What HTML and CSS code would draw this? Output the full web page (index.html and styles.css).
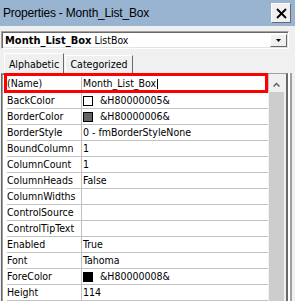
FILE: index.html
```html
<!DOCTYPE html>
<html lang="en">
<head>
    <meta charset="UTF-8">
    <title>Properties - Month_List_Box</title>
    <link rel="stylesheet" href="styles.css">
</head>
<body>
    <!-- TITLE BAR -->
    <div class="titlebar">
        <span class="title">Properties - Month_List_Box</span>
        <div class="close-btn">
            <svg width="11" height="11" viewBox="0 0 11 11"><path d="M1 1L10 10M10 1L1 10" stroke="#000" stroke-width="1.8" fill="none"/></svg>
        </div>
    </div>

    <!-- OBJECT COMBO -->
    <div class="combo">
        <span class="combo-text"><b>Month_List_Box</b> ListBox</span>
        <div class="combo-btn">
            <svg width="5" height="3" viewBox="0 0 5 3"><path d="M0 0H5L2.5 3Z" fill="#000"/></svg>
        </div>
    </div>

    <!-- TABS -->
    <div class="tabs">
        <div class="tab active">Alphabetic</div>
        <div class="tab">Categorized</div>
    </div>

    <!-- PROPERTY GRID -->
    <div class="grid">
        <div class="rows">
            <div class="row selected"><div class="name">(Name)</div><div class="value">Month_List_Box<span class="caret"></span></div></div>
            <div class="row"><div class="name">BackColor</div><div class="value"><span class="swatch white"></span>&amp;H80000005&amp;</div></div>
            <div class="row"><div class="name">BorderColor</div><div class="value"><span class="swatch gray"></span>&amp;H80000006&amp;</div></div>
            <div class="row"><div class="name">BorderStyle</div><div class="value">0 - fmBorderStyleNone</div></div>
            <div class="row"><div class="name">BoundColumn</div><div class="value">1</div></div>
            <div class="row"><div class="name">ColumnCount</div><div class="value">1</div></div>
            <div class="row"><div class="name">ColumnHeads</div><div class="value">False</div></div>
            <div class="row"><div class="name">ColumnWidths</div><div class="value"></div></div>
            <div class="row"><div class="name">ControlSource</div><div class="value"></div></div>
            <div class="row"><div class="name">ControlTipText</div><div class="value"></div></div>
            <div class="row"><div class="name">Enabled</div><div class="value">True</div></div>
            <div class="row"><div class="name">Font</div><div class="value">Tahoma</div></div>
            <div class="row"><div class="name">ForeColor</div><div class="value"><span class="swatch black"></span>&amp;H80000008&amp;</div></div>
            <div class="row"><div class="name">Height</div><div class="value">114</div></div>
        </div>
        <div class="scrollbar">
            <div class="scroll-up">
                <svg width="7" height="5" viewBox="0 0 7 5"><path d="M0.5 4.5L3.5 1.5L6.5 4.5" stroke="#606060" stroke-width="1.5" fill="none"/></svg>
            </div>
            <div class="track"></div>
        </div>
        <!-- highlight around the selected row -->
        <div class="red-box"></div>
    </div>
</body>
</html>
```

FILE: styles.css
```css
:root {
    --bg-color: #f0f0f0;
    --title-color: #99b4d1;
    --dark-edge: #696969;
    --mid-edge: #a0a0a0;
    --line-color: #c0c0c0;
    --track-color: #cdcdcd;
}

* { box-sizing: border-box; margin: 0; padding: 0; }

body {
    width: 295px;
    height: 301px;
    overflow: hidden;
    background: var(--bg-color);
    color: #000;
    font-family: "DejaVu Sans Condensed", "DejaVu Sans", sans-serif;
    font-stretch: condensed;
    font-size: 10.5px;
}

/* title bar */
.titlebar {
    height: 26px;
    background: var(--title-color);
    display: flex;
    align-items: center;
    padding-left: 3px;
}
.title {
    font-family: "Liberation Sans", Arial, sans-serif;
    font-stretch: normal;
    font-size: 12px;
    letter-spacing: -0.2px;
}
.close-btn {
    margin-left: auto;
    margin-right: 4px;
    width: 20px;
    height: 20px;
    background: var(--bg-color);
    border: 1px solid;
    border-color: #fff var(--dark-edge) var(--dark-edge) #fff;
    display: flex;
    align-items: center;
    justify-content: center;
}

/* combo box */
.combo {
    margin: 5px 0 0 1px;
    width: 288px;
    height: 18px;
    background: #fff;
    border: 1px solid;
    border-color: var(--mid-edge) #fff #fff var(--mid-edge);
    box-shadow: inset 1px 1px var(--dark-edge), inset -1px -1px #e3e3e3;
    display: flex;
    align-items: center;
    padding-left: 3px;
}
.combo-text { flex: 1; white-space: nowrap; }
.combo-text b { font-size: 11px; }
.combo-btn {
    width: 17px;
    height: 13px;
    margin-right: 1px;
    background: var(--bg-color);
    border: 1px solid;
    border-color: #fff var(--dark-edge) var(--dark-edge) #fff;
    display: flex;
    align-items: center;
    justify-content: center;
}

/* tabs */
.tabs {
    height: 24px;
    display: flex;
    align-items: flex-end;
    padding-left: 4px;
}
.tab {
    height: 18px;
    width: 68px;
    margin-left: 1px;
    border: 1px solid;
    border-bottom: none;
    border-color: #fff var(--dark-edge) transparent #fff;
    text-align: center;
    line-height: 17px;
}
.tab.active {
    height: 20px;
    width: 60px;
    margin-left: 0;
    line-height: 20px;
}

/* property grid */
.grid {
    position: relative;
    display: flex;
    height: 228px;
    margin-left: 1px;
    width: 287px;
    border-top: 1px solid var(--mid-edge);
    border-left: 1px solid var(--dark-edge);
    border-right: 2px solid var(--dark-edge);
    box-shadow: 2px 0 0 #fff, 4px 0 0 var(--mid-edge);
}

.rows {
    flex: 1;
    background: #fff;
    border-top: 1px solid var(--dark-edge);
    border-left: 1px solid var(--mid-edge);
    padding: 2px 0 0 4px;
}

.row {
    display: flex;
    height: 16px;
    border-bottom: 1px solid var(--line-color);
    line-height: 15px;
    white-space: nowrap;
}
.row.selected { padding-bottom: 2px; line-height: 13px; }
.name {
    width: 75px;
    border-right: 1px solid var(--line-color);
    overflow: hidden;
}
.value {
    flex: 1;
    display: flex;
    align-items: center;
    padding-left: 1px;
}

.swatch {
    width: 10px;
    height: 10px;
    border: 1px solid #000;
    margin: 0 7px 0 0;
}
.swatch.white { background: #fff; }
.swatch.gray { background: #646464; }
.swatch.black { background: #000; }

.caret {
    display: inline-block;
    width: 1px;
    height: 10px;
    background: #000;
    margin-left: 1px;
}

.scrollbar {
    width: 18px;
    display: flex;
    flex-direction: column;
    border-right: 2px solid var(--bg-color);
}
.scroll-up {
    height: 18px;
    background: var(--bg-color);
    border-left: 1px solid var(--line-color);
    display: flex;
    align-items: center;
    justify-content: center;
    padding-top: 2px;
}
.track {
    flex: 1;
    background: var(--track-color);
    border-left: 1px solid var(--bg-color);
}

.red-box {
    position: absolute;
    left: 2px;
    top: -1px;
    width: 264px;
    height: 20px;
    border: 3px solid #ff0000;
}
```
